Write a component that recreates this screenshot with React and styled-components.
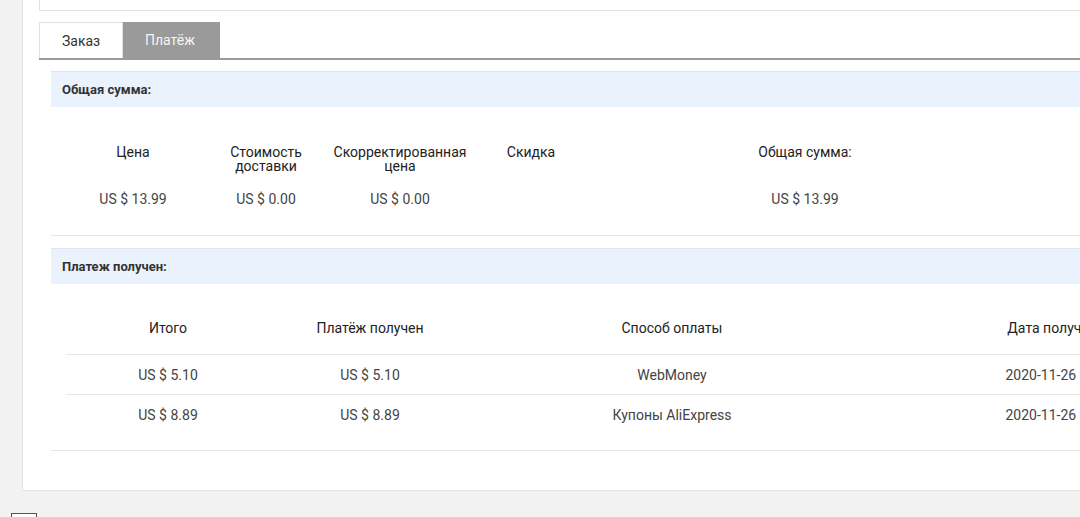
import React from "react";
import styled, { createGlobalStyle } from "styled-components";

const Global = createGlobalStyle`
  html, body { margin: 0; padding: 0; background: #f2f2f2; overflow: hidden; }
  body { font-family: Roboto, "Noto Sans", Arial, sans-serif; color: #333; }
`;

const Page = styled.div`
  width: 1400px;
  height: 517px;
  overflow: hidden;
`;

const Panel = styled.div`
  margin-left: 22px;
  background: #fff;
  border-left: 1px solid #e3e3e3;
  border-bottom: 1px solid #e3e3e3;
  padding: 0 0 39px 16px;
`;

const TopBox = styled.div`
  height: 10px;
  border-left: 1px solid #e3e3e3;
  border-bottom: 1px solid #e3e3e3;
`;

const Tabs = styled.div`
  display: flex;
  margin-top: 11px;
  border-bottom: 2px solid #9a9a9a;
`;

const Tab = styled.div`
  height: 36px;
  display: flex;
  align-items: center;
  box-sizing: border-box;
  padding: 0 22px;
  width: ${(p) => p.$w}px;
  font-size: 14px;
  background: ${(p) => (p.$active ? "#9a9a9a" : "#fff")};
  color: ${(p) => (p.$active ? "#f4f4f4" : "#333")};
  border: ${(p) => (p.$active ? "none" : "1px solid #e0e0e0")};
  border-bottom: none;
`;

const Content = styled.div`
  padding-left: 12px;
`;

const Band = styled.div`
  margin-top: ${(p) => p.$mt}px;
  height: 36px;
  box-sizing: border-box;
  border-top: 1px solid #dfe6ee;
  background: #eaf2fd;
  display: flex;
  align-items: center;
  padding-left: 11px;
  font-size: 13px;
  font-weight: 700;
  color: #333;
`;

const SummaryGrid = styled.div`
  display: grid;
  grid-template-columns: 134px 132px 136px 126px 422px;
  padding: 38px 0 29px 15px;
  row-gap: 19px;
  border-bottom: 1px solid #e6e6e6;
  align-items: start;
`;

const HeadCell = styled.div`
  text-align: center;
  font-size: 14px;
  line-height: 14px;
  color: #222;
`;

const ValueCell = styled.div`
  text-align: center;
  font-size: 14px;
  line-height: 14px;
  color: #444;
`;

const PayWrap = styled.div`
  padding: 36px 0 15px 15px;
  border-bottom: 1px solid #e6e6e6;
`;

const Table = styled.table`
  border-collapse: collapse;
  table-layout: fixed;
  width: 1180px;
`;

const Th = styled.th`
  width: ${(p) => p.$w}px;
  font-weight: 400;
  font-size: 14px;
  line-height: 16px;
  color: #222;
  text-align: center;
  padding: 0 0 18px;
  border-bottom: 1px solid #e6e6e6;
`;

const Td = styled.td`
  font-size: 14px;
  line-height: 16px;
  color: #444;
  text-align: center;
  height: 40px;
  padding: 0;
  box-sizing: border-box;
  border-bottom: ${(p) => (p.$last ? "none" : "1px solid #e6e6e6")};
`;

const Checkbox = styled.div`
  margin: 22px 0 0 11px;
  width: 24px;
  height: 24px;
  border: 1px solid #555;
  background: #fff;
`;

const summary = [
  { h: "Цена", v: "US $ 13.99" },
  { h: <>Стоимость<br />доставки</>, v: "US $ 0.00" },
  { h: <>Скорректированная<br />цена</>, v: "US $ 0.00" },
  { h: "Скидка", v: "" },
  { h: "Общая сумма:", v: "US $ 13.99" },
];

const rows = [
  ["US $ 5.10", "US $ 5.10", "WebMoney", "2020-11-26 05:32"],
  ["US $ 8.89", "US $ 8.89", "Купоны AliExpress", "2020-11-26 05:32"],
];

export default function App() {
  return (
    <Page>
      <Global />
      <Panel>
        <TopBox />
        <Tabs>
          <Tab $w={84}>Заказ</Tab>
          <Tab $w={97} $active>Платёж</Tab>
        </Tabs>
        <Content>
          <Band $mt={11}>Общая сумма:</Band>
          <SummaryGrid>
            {summary.map((s, i) => (
              <HeadCell key={"h" + i}>{s.h}</HeadCell>
            ))}
            {summary.map((s, i) => (
              <ValueCell key={"v" + i}>{s.v}</ValueCell>
            ))}
          </SummaryGrid>
          <Band $mt={12}>Платеж получен:</Band>
          <PayWrap>
            <Table>
              <thead>
                <tr>
                  <Th $w={204}>Итого</Th>
                  <Th $w={200}>Платёж получен</Th>
                  <Th $w={404}>Способ оплаты</Th>
                  <Th $w={372}>Дата получения</Th>
                </tr>
              </thead>
              <tbody>
                {rows.map((r, i) => (
                  <tr key={i}>
                    {r.map((c, j) => (
                      <Td key={j} $last={i === rows.length - 1}>{c}</Td>
                    ))}
                  </tr>
                ))}
              </tbody>
            </Table>
          </PayWrap>
        </Content>
      </Panel>
      <Checkbox />
    </Page>
  );
}
